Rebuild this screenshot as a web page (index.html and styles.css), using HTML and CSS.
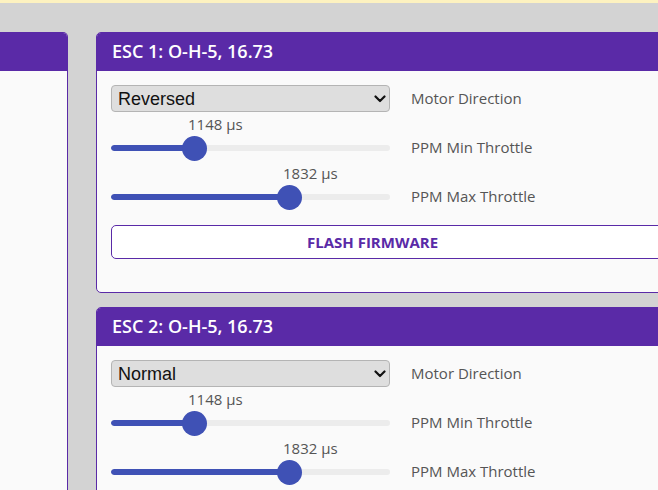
FILE: index.html
```html
<!DOCTYPE html>
<html>
<head>
<meta charset="utf-8">
<link rel="stylesheet" href="styles.css">
</head>
<body>
<div class="topbar"></div>
<div class="main">
  <div class="side">
    <div class="side-head"></div>
    <div class="side-body"></div>
  </div>
  <div class="escs">
    <section class="esc">
      <div class="esc-head">ESC 1: O-H-5, 16.73</div>
      <div class="esc-body">
        <div class="rows">
          <div class="select"><span>Reversed</span><svg class="chev" width="12" height="8" viewBox="0 0 12 8"><path d="M1.5 1.5 L6 6 L10.5 1.5" fill="none" stroke="#111" stroke-width="2.2" stroke-linecap="round" stroke-linejoin="round"/></svg></div>
          <div class="label label-mid">Motor Direction</div>
          <div class="slider-cell">
            <div class="value" style="margin-left:77px">1148 µs</div>
            <div class="slider"><div class="track"><div class="fill" style="width:83px"></div></div><div class="thumb" style="left:70.5px"></div></div>
          </div>
          <div class="label label-end">PPM Min Throttle</div>
          <div class="slider-cell">
            <div class="value" style="margin-left:172px">1832 µs</div>
            <div class="slider"><div class="track"><div class="fill" style="width:178px"></div></div><div class="thumb" style="left:165.5px"></div></div>
          </div>
          <div class="label label-end">PPM Max Throttle</div>
        </div>
        <div class="button">FLASH FIRMWARE</div>
      </div>
    </section>
    <section class="esc">
      <div class="esc-head">ESC 2: O-H-5, 16.73</div>
      <div class="esc-body">
        <div class="rows">
          <div class="select"><span>Normal</span><svg class="chev" width="12" height="8" viewBox="0 0 12 8"><path d="M1.5 1.5 L6 6 L10.5 1.5" fill="none" stroke="#111" stroke-width="2.2" stroke-linecap="round" stroke-linejoin="round"/></svg></div>
          <div class="label label-mid">Motor Direction</div>
          <div class="slider-cell">
            <div class="value" style="margin-left:77px">1148 µs</div>
            <div class="slider"><div class="track"><div class="fill" style="width:83px"></div></div><div class="thumb" style="left:70.5px"></div></div>
          </div>
          <div class="label label-end">PPM Min Throttle</div>
          <div class="slider-cell">
            <div class="value" style="margin-left:172px">1832 µs</div>
            <div class="slider"><div class="track"><div class="fill" style="width:178px"></div></div><div class="thumb" style="left:165.5px"></div></div>
          </div>
          <div class="label label-end">PPM Max Throttle</div>
        </div>
        <div class="button">FLASH FIRMWARE</div>
      </div>
    </section>
  </div>
</div>
</body>
</html>
```
FILE: styles.css
```css
html, body {
  margin: 0;
  padding: 0;
}
body {
  width: 658px;
  height: 490px;
  overflow: hidden;
  background: #d3d3d3;
  font-family: "Open Sans", sans-serif;
}
.topbar {
  height: 3px;
  background: #fdf2c0;
}
.main {
  display: flex;
  gap: 28px;
  padding-top: 29px;
  width: 760px;
}
.side {
  flex: none;
  width: 67px;
  height: 520px;
  border: 1px solid #5a2aa7;
  border-left: 0;
  border-radius: 0 5px 0 0;
  background: #fafafa;
  overflow: hidden;
}
.side-head {
  height: 38px;
  background: #5a2aa7;
}
.escs {
  flex: none;
  width: 603px;
}
.esc {
  border: 1px solid #5a2aa7;
  border-radius: 5px;
  background: #fafafa;
  overflow: hidden;
}
.esc + .esc {
  margin-top: 14px;
}
.esc-head {
  height: 38px;
  line-height: 37px;
  padding-left: 15px;
  background: #5a2aa7;
  color: #fff;
  font-size: 18px;
  font-weight: 600;
}
.esc-body {
  padding: 14px 14px 33px;
}
.rows {
  display: grid;
  grid-template-columns: 279px auto;
  column-gap: 21px;
}
.select {
  height: 27px;
  box-sizing: border-box;
  border: 1px solid #b4b4b4;
  border-radius: 4px;
  background: #dedede;
  display: flex;
  align-items: center;
  justify-content: space-between;
  padding: 1px 3px 0 6px;
  font-family: "Liberation Sans", Arial, sans-serif;
  font-size: 18px;
  color: #111;
}
.chev {
  display: block;
}
.label {
  font-size: 15px;
  color: #555;
}
.label-mid {
  align-self: center;
  margin-bottom: 2px;
}
.label-end {
  align-self: end;
  height: 25px;
  line-height: 23px;
  box-sizing: border-box;
  padding-bottom: 2px;
}
.slider-cell {
  padding-top: 2px;
}
.value {
  font-size: 15px;
  line-height: 20px;
  color: #555;
  margin-bottom: 2px;
}
.slider {
  position: relative;
  height: 25px;
}
.track {
  position: absolute;
  top: 9px;
  left: 0;
  right: 0;
  height: 6px;
  border-radius: 3px;
  background: #ececec;
  overflow: hidden;
}
.fill {
  height: 100%;
  background: #3f51b5;
  border-radius: 3px;
}
.thumb {
  position: absolute;
  top: 0;
  width: 25px;
  height: 25px;
  border-radius: 50%;
  background: #3f51b5;
}
.button {
  margin-top: 15px;
  height: 34px;
  box-sizing: border-box;
  border: 1px solid #5a2aa7;
  border-radius: 5px;
  background: #fff;
  color: #5a2aa7;
  font-size: 15px;
  font-weight: 700;
  line-height: 32px;
  text-align: center;
  padding-right: 50px;
}
```
